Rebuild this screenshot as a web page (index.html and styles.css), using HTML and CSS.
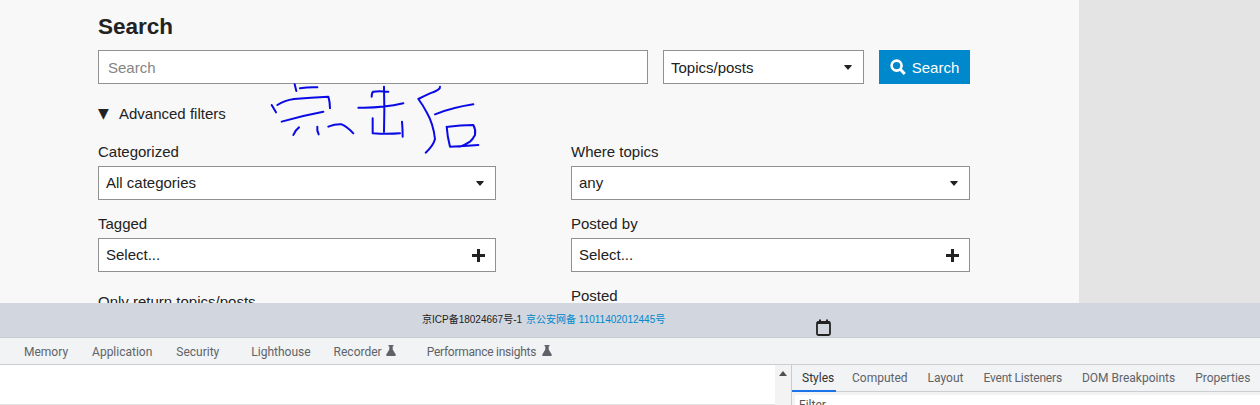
FILE: index.html
```html
<!DOCTYPE html>
<html lang="en">
<head>
<meta charset="utf-8">
<title>Search</title>
<link rel="stylesheet" href="styles.css">
</head>
<body>
<div class="page">
  <div class="viewport">
    <main class="main">
      <h2 class="title">Search</h2>
      <div class="search-row">
        <input class="search-input" type="text" placeholder="Search">
        <div class="control control-type"><span>Topics/posts</span><svg class="caret" viewBox="0 0 10 6"><path d="M1 0h8q1 0 .4.8L5.5 5.4q-.5.6-1 0L.6.8Q0 0 1 0z"/></svg></div>
        <button class="search-btn" type="button"><svg class="search-icon" viewBox="0 0 16 16"><circle cx="6.6" cy="6.6" r="5" fill="none" stroke="#fff" stroke-width="2.6"/><path d="M10.300 10.300l4.400 4.700" stroke="#fff" stroke-width="3" fill="none"/></svg>Search</button>
      </div>
      <div class="advanced"><span class="tri">▼</span>Advanced filters</div>
      <div class="filters">
        <div class="col">
          <div class="group">
            <div class="label">Categorized</div>
            <div class="control"><span>All categories</span><svg class="caret" viewBox="0 0 10 6"><path d="M1 0h8q1 0 .4.8L5.5 5.4q-.5.6-1 0L.6.8Q0 0 1 0z"/></svg></div>
          </div>
          <div class="group">
            <div class="label">Tagged</div>
            <div class="control"><span>Select...</span><svg class="plus" viewBox="0 0 12 12"><path d="M4.6 0h2.8v4.6H12v2.8H7.4V12H4.6V7.4H0V4.6h4.6z"/></svg></div>
          </div>
          <div class="group group-wide">
            <div class="label">Only return topics/posts</div>
          </div>
        </div>
        <div class="col">
          <div class="group">
            <div class="label">Where topics</div>
            <div class="control"><span>any</span><svg class="caret" viewBox="0 0 10 6"><path d="M1 0h8q1 0 .4.8L5.5 5.4q-.5.6-1 0L.6.8Q0 0 1 0z"/></svg></div>
          </div>
          <div class="group">
            <div class="label">Posted by</div>
            <div class="control"><span>Select...</span><svg class="plus" viewBox="0 0 12 12"><path d="M4.6 0h2.8v4.6H12v2.8H7.4V12H4.6V7.4H0V4.6h4.6z"/></svg></div>
          </div>
          <div class="group">
            <div class="label">Posted</div>
          </div>
        </div>
      </div>
    </main>
    <aside class="side"></aside>
  </div>
  <footer class="beian"><span>京ICP备18024667号-1</span> <a class="beian-link">京公安网备 11011402012445号</a></footer>
  <nav class="dt-tabs">
    <span class="dt-tab">Memory</span>
    <span class="dt-tab">Application</span>
    <span class="dt-tab">Security</span>
    <span class="dt-tab dt-tab-push">Lighthouse</span>
    <span class="dt-tab">Recorder<svg class="flask" viewBox="0 0 10 11"><path d="M2.500 0h5v1.200H6.700V4.500l3 5q.5 1.500-.9 1.500H1.200Q-.2 11 .3 9.500l3-5V1.200H2.500z"/></svg></span>
    <span class="dt-tab dt-tab-far">Performance insights<svg class="flask flask-far" viewBox="0 0 10 11"><path d="M2.500 0h5v1.200H6.700V4.500l3 5q.5 1.500-.9 1.500H1.200Q-.2 11 .3 9.500l3-5V1.200H2.500z"/></svg></span>
  </nav>
  <section class="dt-panels">
    <div class="dt-left"><div class="dt-content"></div><div class="dt-scroll"><svg class="scroll-up" viewBox="0 0 10 6"><path d="M5 0l5 6H0z"/></svg></div></div>
    <div class="dt-right">
      <div class="sub-tabs">
        <span class="sub-tab sub-active">Styles</span>
        <span class="sub-tab">Computed</span>
        <span class="sub-tab">Layout</span>
        <span class="sub-tab sub-tight">Event Listeners</span>
        <span class="sub-tab">DOM Breakpoints</span>
        <span class="sub-tab">Properties</span>
      </div>
      <div class="filter-box">Filter</div>
    </div>
  </section>
  <svg class="calendar" viewBox="0 0 16 17"><rect x="1" y="3" width="13" height="13" rx="1.500" fill="none" stroke="#222" stroke-width="1.800"/><path d="M1 2.500h13v2.500H1z" fill="#222"/><path d="M4 .5v3M11 .5v3" stroke="#222" stroke-width="2"/></svg>
  <svg class="scribble" viewBox="0 0 690 255">
    <path d="M104 28l5 20M120 40q25-4 52-3M52 90q22-14 50-18 50-4 103-7 5 16 5 35M35 90l13 22M65 140q60-18 125-30M100 180q5-14 17-23M172 155q-2 12 4 23M205 155q20-8 40-7 18 8 35 27"/>
    <path d="M335 65q0-12 5-15 15-3 45 0M372 35q2 70 0 135M295 98q70 2 135-13M338 130v45q45 3 82 0M426 140q2 22 2 45"/>
    <path d="M540 35q2 10-30 20-18 8-35 17 15 20 25 40 20 35 25 80-5 20-28 41M525 118q50-20 115-30M560 155q2 30 10 60 40-2 85-5M565 155q35-5 75-5 8 15 5 30-8 15-15 20-15 10-30 15"/>
  </svg>
</div>
</body>
</html>
```

FILE: styles.css
```css
* { box-sizing: border-box; }
html, body { margin: 0; padding: 0; }
body { font-family: "Liberation Sans", Arial, sans-serif; font-size: 15px; color: #222; }

.page { position: relative; width: 1260px; height: 405px; overflow: hidden; background: #fff; }

.viewport { display: flex; height: 303px; overflow: hidden; }
.main { width: 1079px; background: #f8f8f8; padding: 13px 109px 0 98px; }
.side { flex: 1; background: #e4e4e4; }

.title { margin: 0 0 9px; font-size: 22.5px; line-height: 28px; font-weight: 700; color: #222; }

.search-row { display: flex; height: 34px; }
.search-input { width: 550px; height: 34px; border: 1px solid #919191; background: #fff; padding: 0 9px; font: 15px "Liberation Sans", Arial, sans-serif; color: #222; border-radius: 0; outline: none; }
.search-input::placeholder { color: #858585; opacity: 1; }

.control { display: flex; align-items: center; justify-content: space-between; height: 34px; border: 1px solid #919191; background: #fff; padding: 0 11px 1px 7px; }
.control-type { width: 201px; margin-left: 15px; padding-bottom: 0; }

.caret { width: 10px; height: 5px; fill: #222; margin: 1px -1px 0 0; }
.plus { width: 13px; height: 13px; fill: #222; margin: 1px -1px 0 0; }

.search-btn { display: flex; align-items: center; justify-content: center; width: 91px; height: 34px; margin-left: 15px; border: 0; padding: 0; background: #0088cc; color: #fff; font: 15px "Liberation Sans", Arial, sans-serif; }
.search-icon { width: 16px; height: 16px; margin-right: 6px; }

.advanced { display: flex; align-items: center; height: 20px; margin-top: 19px; color: #222; font-size: 15px; }
.tri { width: 21px; font-size: 14px; font-family: "DejaVu Sans", sans-serif; }

.filters { display: grid; grid-template-columns: 398px 399px; column-gap: 75px; margin-top: 19px; }
.group { margin-bottom: 14px; }
.group-wide { margin-top: 20px; }
.label { height: 20px; line-height: 20px; margin-bottom: 4px; color: #222; font-size: 15px; }

.beian { display: flex; gap: 4px; align-items: center; height: 34px; padding: 0 0 3px 422px; background: #d2d6de; font-size: 10px; color: #222; font-family: "Liberation Sans", "Noto Sans CJK SC", sans-serif; }
.beian-link { color: #0088cc; }

.dt-tabs { display: flex; align-items: center; height: 28px; padding: 1px 0 0 24px; background: #f1f3f5; border-top: 1px solid #c8cbd0; border-bottom: 1px solid #cbcdd1; font: 12px Roboto, sans-serif; color: #5f6368; }
.dt-tab { display: flex; align-items: center; margin-right: 24px; white-space: nowrap; }
.dt-tab-push { margin-left: 8px; margin-right: 23px; }
.dt-tab-far { margin-left: 7px; letter-spacing: -0.25px; }
.flask { width: 10px; height: 11px; margin: -3px 0 0 4px; fill: #5f6368; }
.flask-far { margin-left: 6px; }

.dt-panels { display: flex; height: 41px; }
.dt-left { display: flex; flex: none; width: 792px; border-right: 1px solid #c8cbd0; }
.dt-content { flex: 1; height: 39px; background: #fff; box-shadow: 0 1px 0 #e3e3e3; }
.dt-scroll { display: flex; flex: none; justify-content: center; align-items: flex-start; width: 16px; background: #f3f3f3; padding-top: 6px; }
.scroll-up { width: 8px; height: 5px; fill: #505050; }

.dt-right { flex: 1; min-width: 0; overflow: hidden; background: #f1f3f5; }
.sub-tabs { display: flex; height: 27px; border-bottom: 1px solid #cbcdd1; font: 12px Roboto, sans-serif; color: #5f6368; white-space: nowrap; }
.sub-tab { display: flex; flex: none; align-items: center; padding: 0 10px; height: 26px; }
.sub-tight { letter-spacing: -0.2px; }
.sub-active { color: #333; width: 44px; margin-right: 6px; border-bottom: 2px solid #1a73e8; height: 27px; padding: 0 0 0 10px; }
.filter-box { margin: 3px 0 0 3px; height: 20px; padding: 3px 4px; background: #fff; font: 12px Roboto, sans-serif; color: #555; }

.calendar { position: absolute; left: 816px; top: 319px; width: 16px; height: 17px; }
.scribble { position: absolute; left: 260px; top: 75px; width: 230px; height: 85px; fill: none; stroke: #0a0ae6; stroke-width: 6; stroke-linecap: round; stroke-linejoin: round; }
```
